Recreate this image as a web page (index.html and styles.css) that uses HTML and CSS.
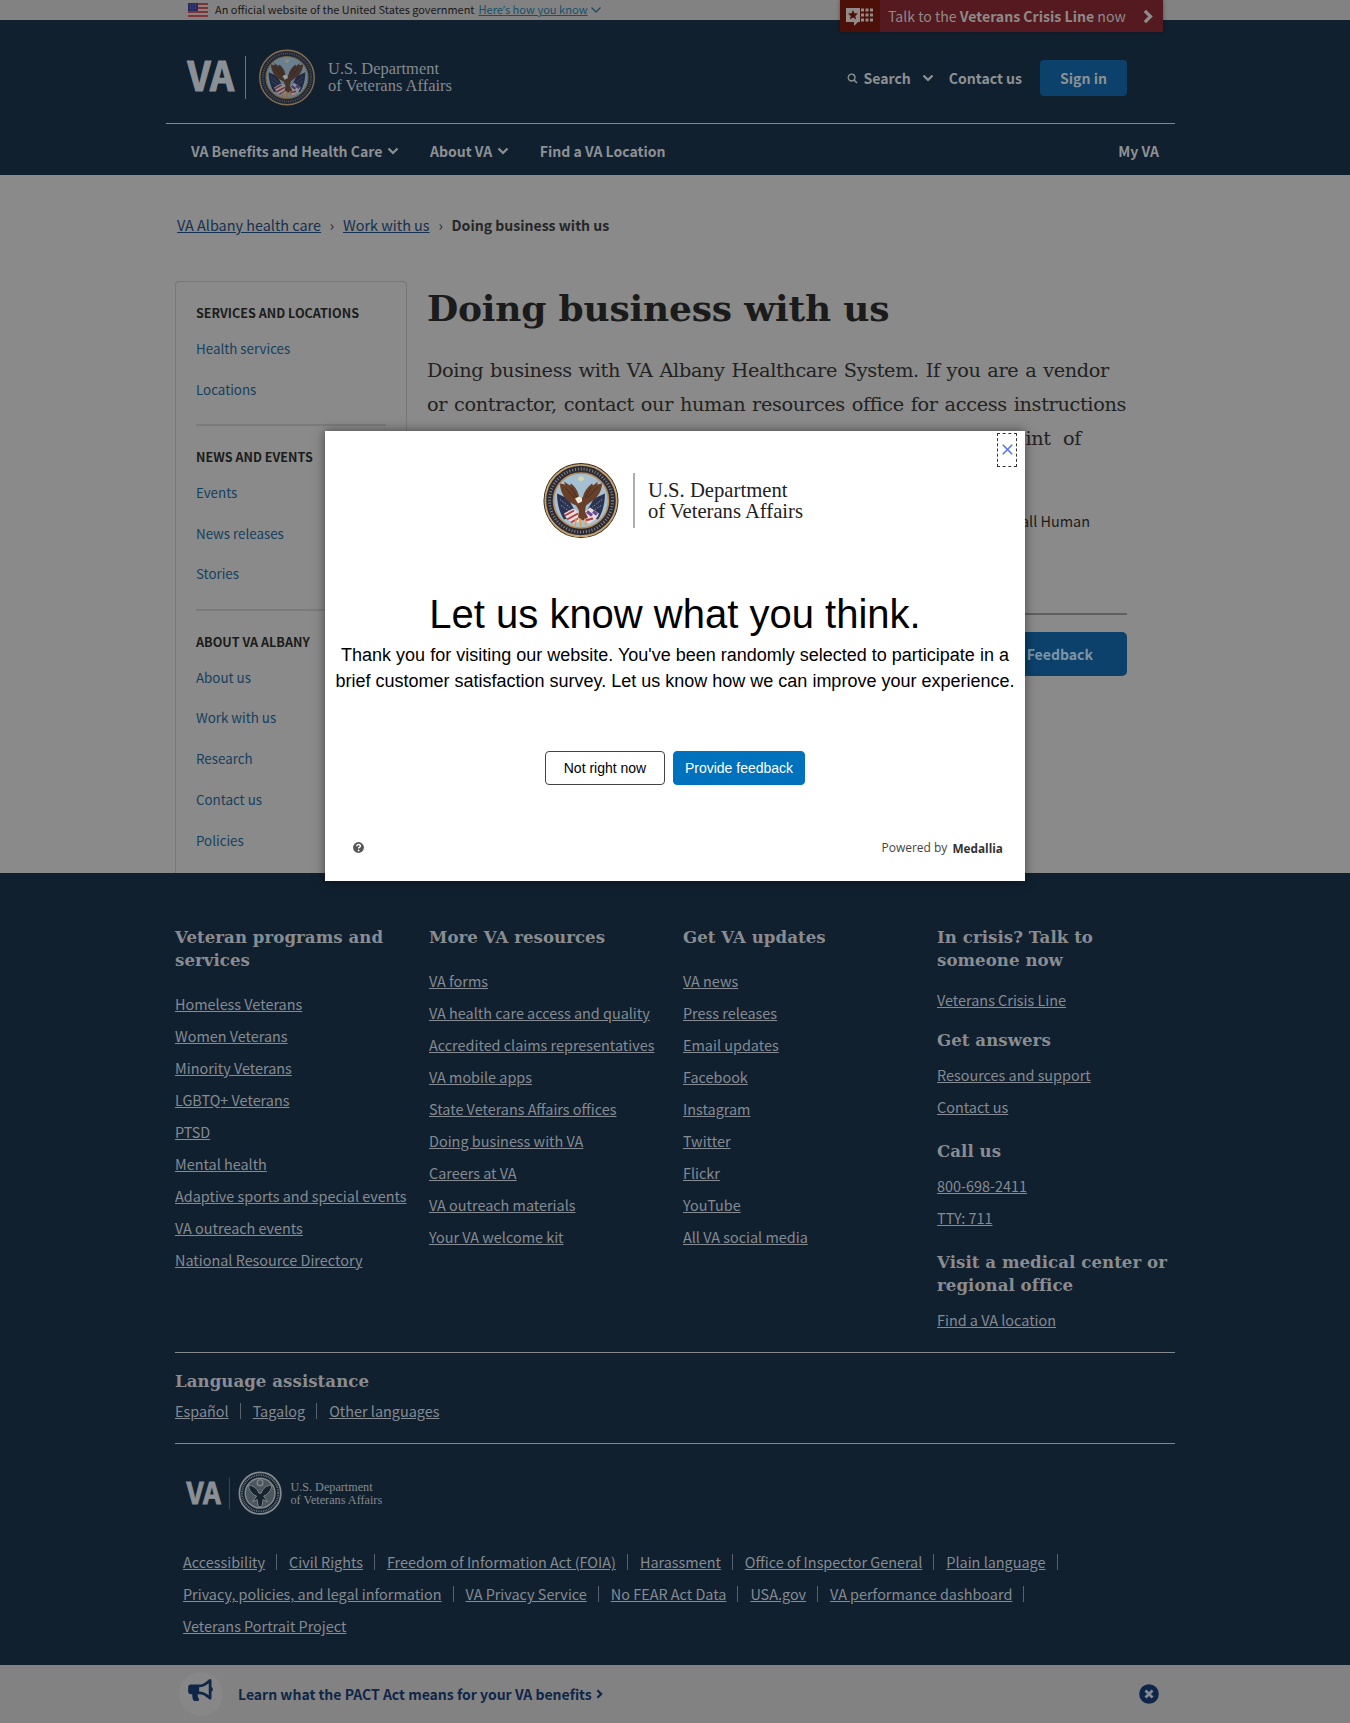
FILE: index.html
```html
<!DOCTYPE html>
<html lang="en">
<head>
<meta charset="utf-8">
<title>Doing business with us | VA Albany health care</title>
<link rel="stylesheet" href="styles.css">
</head>
<body>
<svg class="defs" width="0" height="0" aria-hidden="true">
  <symbol id="chev" viewBox="0 0 12 8"><path d="M1.5 1.5 6 6l4.500-4.500" fill="none" stroke="currentColor" stroke-width="2.200"/></symbol>
  <symbol id="chev-right" viewBox="0 0 8 12"><path d="M1.500 1.500 6 6 1.500 10.500" fill="none" stroke="currentColor" stroke-width="2.600"/></symbol>
  <symbol id="seal" viewBox="0 0 76 76">
    <circle cx="38" cy="38" r="37.500" fill="#2c2420"/>
    <circle cx="38" cy="38" r="35.700" fill="#292b3a" stroke="#c9a36c" stroke-width="1.800"/>
    <circle cx="38" cy="38" r="31.500" fill="none" stroke="#8c8474" stroke-width="2.800" stroke-dasharray="1 1.900"/>
    <circle cx="38" cy="38" r="27.500" fill="#a4c0d2" stroke="#b98d55" stroke-width="1.600"/>
    <path d="M14 31l11 5 8 14-3 4-9 3c-4-6-7-15-7-26zM62 31l-11 5-8 14 3 4 9 3c4-6 7-15 7-26z" fill="#2b3350"/>
    <path d="M17 37l10 8M18 43l9 6M59 37l-10 8M58 43l-9 6" stroke="#8c9bb5" stroke-width="1" stroke-dasharray="1.500 1.500"/>
    <path d="M21 51l9-5 7 4-1 9-5 2c-5-2-8-5-10-10zM56 51l-9-6-6 5v9l5 2c5-2 8-5 10-10z" fill="#e6dcdc"/>
    <path d="M22 53l9-5M24 57l11-6M28 60l7-4M42 58l8-2" stroke="#b23a40" stroke-width="1.900"/>
    <path d="M44 49l5 4M50 49l4 3" stroke="#6a4a90" stroke-width="3"/>
    <path d="M17 21l5 1-1-3 6 4 1-2c5 4 7 8 8 13l2 3 2-3c1-5 4-9 9-13l1 2 5-4-1 3 5-1c0 8-5 15-12 19l-4 3-1 6 3 6-5 3-5-3 1-7-3-5-4-2c-7-4-12-11-12-20z" fill="#68402a"/>
    <path d="M22 25l10 11M28 25l6 10M54 25L44 36M48 25l-6 10" stroke="#482b1c" stroke-width="1"/>
    <path d="M32 36l4-2 3 2v3l-4 2z" fill="#eee8dc"/>
    <path d="M36 14h4l1 3-3 2-3-2z" fill="#d9d6a4"/>
    <path d="M33 56l-1 8M37 56l1 9M42 56l1 7" stroke="#e99b48" stroke-width="1.700"/>
  </symbol>
  <symbol id="seal-mono" viewBox="0 0 76 76">
    <circle cx="38" cy="38" r="35.500" fill="none" stroke="#85898e" stroke-width="3"/>
    <circle cx="38" cy="38" r="31" fill="none" stroke="#6b7279" stroke-width="3.500" stroke-dasharray="1.500 1.500"/>
    <circle cx="38" cy="38" r="25.500" fill="#4c565f" stroke="#85898e" stroke-width="2.500"/>
    <path d="M18 24c7 1 15 5 18 14h4c3-9 9-13 18-14-1 9-6 16-14 19l7 10-8-4-2 12h-6l-2-12-8 4 7-10c-8-3-13-10-14-19z" fill="#15232f" stroke="#85898e" stroke-width="1.500"/>
    <circle cx="38" cy="20" r="5" fill="none" stroke="#85898e" stroke-width="2"/>
  </symbol>
</svg>

<div class="gov-banner">
  <div class="gov-inner">
    <svg class="flag" width="20" height="14" viewBox="0 0 20 14"><path fill="#8b8180" d="M0 0h20v14H0z"/><path d="M0 1h20M0 5h20M0 9h20M0 13h20" stroke="#7d3436" stroke-width="1.800"/><path fill="#262b66" d="M0 0h10v8H0z"/><path d="M2 2h7M2 5h7" stroke="#62658a" stroke-width="1" stroke-dasharray="1 1.500"/></svg>
    <span class="gov-text">An official website of the United States government</span>
    <a class="gov-link">Here<span class="apos">’</span>s how you know</a>
    <svg class="gov-chev" width="12" height="8" viewBox="0 0 12 8"><path d="M1.500 1.500 6 6l4.500-4.500" fill="none" stroke="#1b4a5c" stroke-width="1.300"/></svg>
  </div>
</div>
<div class="crisis">
  <div class="crisis-icon"><svg width="30" height="20" viewBox="0 0 30 20"><path d="M1 1h14v14h-2l-4 4v-4H1z" fill="#918c8a"/><path d="M8 3l1.400 3.300 3.600.3-2.700 2.400.8 3.500L8 10.600l-3.100 1.900.8-3.500L3 6.600l3.600-.3z" fill="#4c1009"/><path d="M16 3h13M16 8h13M16 13h13" stroke="#918c8a" stroke-width="3" stroke-dasharray="3 1.500"/></svg></div>
  <span class="crisis-text">Talk to the <b>Veterans Crisis Line</b> now</span>
  <svg width="10" height="15" viewBox="0 0 8 12"><use href="#chev-right"/></svg>
</div>

<header class="header">
  <div class="head-row">
    <svg class="logo" width="270" height="60" viewBox="187 47 270 60">
      <text x="187.500" y="91" class="logo-va" textLength="46.500" lengthAdjust="spacingAndGlyphs">VA</text>
      <path d="M245.500 56v43" stroke="#6d757d"/>
      <g class="dim"><use href="#seal" x="258" y="48.500" width="58" height="58"/></g>
      <text x="328" y="74" class="logo-dept" textLength="111" lengthAdjust="spacingAndGlyphs">U.S. Department</text>
      <text x="328" y="91" class="logo-dept" textLength="124" lengthAdjust="spacingAndGlyphs">of Veterans Affairs</text>
    </svg>
    <div class="actions">
      <svg class="mag" width="11" height="11" viewBox="0 0 11 11"><circle cx="4.600" cy="4.600" r="3.400" fill="none" stroke="currentColor" stroke-width="1.300"/><path d="M7 7l3 3" stroke="currentColor" stroke-width="1.500"/></svg>
      <span class="search">Search</span>
      <svg class="a-chev" width="12" height="8"><use href="#chev"/></svg>
      <span class="contact">Contact us</span>
      <span class="signin">Sign in</span>
    </div>
  </div>
  <nav class="nav">
    <span>VA Benefits and Health Care</span><svg class="n-chev" width="12" height="8"><use href="#chev"/></svg>
    <span>About VA</span><svg class="n-chev" width="12" height="8"><use href="#chev"/></svg>
    <span>Find a VA Location</span>
    <span class="myva">My VA</span>
  </nav>
</header>

<main class="main">
  <div class="crumbs"><a>VA Albany health care</a><i>›</i><a>Work with us</a><i>›</i><b>Doing business with us</b></div>
  <div class="columns">
    <aside class="side">
      <section><h2>SERVICES AND LOCATIONS</h2><a>Health services</a><a>Locations</a></section>
      <section><h2>NEWS AND EVENTS</h2><a>Events</a><a>News releases</a><a>Stories</a></section>
      <section><h2>ABOUT VA ALBANY</h2><a>About us</a><a>Work with us</a><a>Research</a><a>Contact us</a><a>Policies</a></section>
    </aside>
    <article class="article">
      <h1>Doing business with us</h1>
      <p class="intro"><span class="l1">Doing business with VA Albany Healthcare System. If you are a vendor</span><span class="l2">or contractor, contact our human resources office for access instructions</span><span class="l3">and with help in handling the other procedures and a point of</span></p>
      <p class="body">call Human</p>
      <hr>
      <div class="fb-row"><span class="fb">Feedback</span></div>
    </article>
  </div>
</main>

<footer class="footer">
  <div class="fcols">
    <div><h3>Veteran programs and<br>services</h3><ul><li><a>Homeless Veterans</a></li><li><a>Women Veterans</a></li><li><a>Minority Veterans</a></li><li><a>LGBTQ+ Veterans</a></li><li><a>PTSD</a></li><li><a>Mental health</a></li><li><a>Adaptive sports and special events</a></li><li><a>VA outreach events</a></li><li><a>National Resource Directory</a></li></ul></div>
    <div><h3>More VA resources</h3><ul><li><a>VA forms</a></li><li><a>VA health care access and quality</a></li><li><a>Accredited claims representatives</a></li><li><a>VA mobile apps</a></li><li><a>State Veterans Affairs offices</a></li><li><a>Doing business with VA</a></li><li><a>Careers at VA</a></li><li><a>VA outreach materials</a></li><li><a>Your VA welcome kit</a></li></ul></div>
    <div><h3>Get VA updates</h3><ul><li><a>VA news</a></li><li><a>Press releases</a></li><li><a>Email updates</a></li><li><a>Facebook</a></li><li><a>Instagram</a></li><li><a>Twitter</a></li><li><a>Flickr</a></li><li><a>YouTube</a></li><li><a>All VA social media</a></li></ul></div>
    <div class="contact-col"><h3>In crisis? Talk to<br>someone now</h3><ul class="crisis-list"><li><a>Veterans Crisis Line</a></li></ul><h3 class="answers">Get answers</h3><ul><li><a>Resources and support</a></li><li><a>Contact us</a></li></ul><h3>Call us</h3><ul><li><a>800-698-2411</a></li><li><a>TTY: 711</a></li></ul><h3>Visit a medical center or<br>regional office</h3><ul><li><a>Find a VA location</a></li></ul></div>
  </div>
  <div class="lang"><h3>Language assistance</h3><div class="links"><a>Español</a><i></i><a>Tagalog</a><i></i><a>Other languages</a></div></div>
  <div class="foot-end">
    <svg class="logo" width="200" height="44.400" viewBox="187 47 270 60">
      <text x="187.500" y="91" class="logo-va" textLength="46.500" lengthAdjust="spacingAndGlyphs">VA</text>
      <path d="M245.500 56v43" stroke="#4a545e"/>
      <use href="#seal-mono" x="257" y="47" width="60" height="60"/>
      <text x="328" y="74" class="logo-dept" textLength="111" lengthAdjust="spacingAndGlyphs">U.S. Department</text>
      <text x="328" y="91" class="logo-dept" textLength="124" lengthAdjust="spacingAndGlyphs">of Veterans Affairs</text>
    </svg>
    <div class="links"><a>Accessibility</a><i></i><a>Civil Rights</a><i></i><a>Freedom of Information Act (FOIA)</a><i></i><a>Harassment</a><i></i><a>Office of Inspector General</a><i></i><a>Plain language</a><i></i></div>
    <div class="links"><a>Privacy, policies, and legal information</a><i></i><a>VA Privacy Service</a><i></i><a>No FEAR Act Data</a><i></i><a>USA.gov</a><i></i><a>VA performance dashboard</a><i></i></div>
    <div class="links"><a>Veterans Portrait Project</a></div>
  </div>
</footer>

<div class="promo">
  <div class="promo-inner">
    <div class="horn"><svg width="25" height="22" viewBox="0 0 576 512"><path fill="#0f2648" d="M576 240c0-23.630-12.950-44.040-32-55.120V32.010C544 23.260 537.020 0 512 0c-7.120 0-14.190 2.380-19.980 7.020l-85.030 68.030C364.280 109.190 310.660 128 256 128H64c-35.350 0-64 28.650-64 64v96c0 35.350 28.650 64 64 64h33.700c-1.390 10.480-2.180 21.140-2.180 32 0 39.770 9.260 77.350 25.560 110.940 5.190 10.690 16.520 17.060 28.400 17.060h74.280c26.050 0 41.690-29.840 25.900-50.560-16.400-21.520-26.150-48.360-26.150-77.440 0-11.110 1.620-21.790 4.410-32H256c54.660 0 108.280 18.810 150.980 52.950l85.030 68.030a32.023 32.023 0 0 0 19.980 7.020c24.920 0 32-22.780 32-32V295.130C563.050 284.040 576 263.630 576 240zm-96 141.420l-33.050-26.440C392.950 311.780 325.120 288 256 288v-96c69.120 0 136.950-23.780 190.950-66.980L480 98.580v282.840z"/></svg></div>
    <b>Learn what the PACT Act means for your VA benefits</b>
    <svg class="p-chev" width="7" height="10" viewBox="0 0 8 12"><use href="#chev-right"/></svg>
    <svg class="p-close" width="20" height="20" viewBox="0 0 20 20"><circle cx="10" cy="10" r="9.800" fill="#0f2648"/><path d="M6.500 6.500l7 7M13.500 6.500l-7 7" stroke="#858b92" stroke-width="2.800"/></svg>
  </div>
</div>

<div class="modal" role="dialog">
  <div class="close"><svg width="11" height="11" viewBox="0 0 11 11"><path d="M.8.800l9.400 9.400M10.200.800L.8 10.200" stroke="#5476f2" stroke-width="1.600"/></svg></div>
  <svg class="m-logo" width="270" height="88" viewBox="536 456 270 88">
    <use href="#seal" x="543" y="462.500" width="76" height="76"/>
    <path d="M634 473v55" stroke="#777" stroke-width="1.200"/>
    <text x="648" y="497" class="m-dept" textLength="139.500" lengthAdjust="spacingAndGlyphs">U.S. Department</text>
    <text x="648" y="518" class="m-dept" textLength="155" lengthAdjust="spacingAndGlyphs">of Veterans Affairs</text>
  </svg>
  <h2>Let us know what you think.</h2>
  <p>Thank you for visiting our website. You've been randomly selected to participate in a<br>brief customer satisfaction survey. Let us know how we can improve your experience.</p>
  <div class="btns"><span class="no">Not right now</span><span class="yes">Provide feedback</span></div>
  <div class="m-foot">
    <svg width="11" height="11" viewBox="0 0 11 11"><circle cx="5.500" cy="5.500" r="5.400" fill="#555"/><path d="M3.700 4.300C3.700 2 7.400 2 7.400 4.100c0 1.300-1.800 1.300-1.800 2.500" fill="none" stroke="#fff" stroke-width="1.400"/><circle cx="5.600" cy="8.400" r=".9" fill="#fff"/></svg>
    <span class="pow">Powered by</span><span class="med">Medallia</span>
  </div>
</div>
</body>
</html>
```
FILE: styles.css
```css
* { box-sizing: border-box; }
body {
  position: relative; margin: 0; width: 1350px; height: 1723px; overflow: hidden;
  background: #8a8a8a; color: #1b1b1b;
  font: 14.42px/20px "Noto Sans CJK SC", sans-serif;
}
h1, h2, h3, p, ul { margin: 0; padding: 0; }
li { list-style: none; }
i { font-style: normal; }
svg { flex: none; }
span, a, b { white-space: nowrap; }
.defs { position: absolute; }

.gov-banner { height: 20px; background: #828282; }
.gov-inner { display: flex; padding-left: 188px; height: 20px; font-size: 10.95px; line-height: 19.5px; color: #191919; }
.flag { margin: 3px 7px 0 0; }
.gov-link { margin-left: 4px; color: #16506b; font-size: 11.1px; text-decoration: underline; }
.apos { font-family: "Open Sans", sans-serif; }
.gov-chev { margin-top: 6px; margin-left: 2px; }

.crisis {
  position: absolute; left: 840px; top: 0; width: 323px; height: 32px;
  display: flex; align-items: center; background: #541a20; color: #8f8a89;
  box-shadow: 0 0 4px rgba(0, 0, 0, .4);
}
.crisis-icon { width: 40px; height: 32px; padding: 7px 0 0 5px; background: #4c1009; }
.crisis-text { width: 263px; padding-left: 8px; font-size: 14.1px; }

.header { height: 155px; background: #11202f; color: #8e9194; font-size: 14.05px; font-weight: 700; }
.head-row { display: flex; align-items: center; width: 1009px; height: 104px; margin-left: 166px; padding: 11px 48px 1px 21px; border-bottom: 1px solid #84898e; }
.logo { display: block; overflow: visible; }
.logo-va { font: 700 40px "Noto Sans CJK SC", sans-serif; fill: #8b9096; stroke: #8b9096; stroke-width: 1.2px; }
.logo-dept { font: 17.5px "Liberation Serif", serif; fill: #858a90; }
.dim { opacity: .6; }
.actions { display: flex; align-items: center; margin-left: auto; padding-top: 3px; }
.mag { margin-right: 5px; }
.a-chev { margin: 0 15px 0 11px; }
.contact { margin-right: 18px; }
.signin { width: 87px; height: 36px; border-radius: 4px; background: #0b416a; line-height: 36px; text-align: center; }
.nav { display: flex; align-items: center; height: 51px; padding: 2px 191px 0; }
.n-chev { margin: 0 30.5px 0 5px; }
.myva { margin-left: auto; }

.main { height: 698px; padding: 40px 0 0 175px; }
.crumbs { display: flex; height: 20px; padding-left: 2px; color: #262626; }
.crumbs a { color: #16304f; text-decoration: underline; }
.crumbs i { width: 22px; text-align: center; }
.crumbs b { font-size: 14.05px; }
.columns { display: flex; gap: 20px; padding-top: 46px; }
.side { width: 232px; height: 592px; padding: 21px 20px 0; border: 1px solid #777; border-bottom: 0; border-radius: 4px 4px 0 0; }
.side section + section { border-top: 2px solid #7b7b7b; padding-top: 21px; }
.side section { padding-bottom: 14.3px; }
.side h2 { font-size: 12.6px; line-height: 20px; height: 25px; white-space: nowrap; }
.side a { display: block; height: 40.8px; font-size: 13.35px; line-height: 41px; color: #153f5e; }
.article { width: 700px; }
h1, h3, .intro { font-family: "DejaVu Serif", serif; }
h1 { font-size: 36px; line-height: 52px; letter-spacing: -.2px; white-space: nowrap; padding-top: 1px; }
.intro { padding-top: 20px; font-size: 19.3px; line-height: 34px; color: #222; }
.intro span { display: block; text-align-last: justify; letter-spacing: -.35px; }
.l1 { width: 682px; }
.l2 { width: 699px; }
.l3 { width: 654px; }
.body { margin-top: 54px; padding-right: 37px; text-align: right; line-height: 22px; }
.article hr { margin: 81px 0 17px; border: 0; border-top: 2px solid #606060; }
.fb-row { display: flex; justify-content: flex-end; }
.fb { width: 150px; height: 44px; padding-right: 34px; border-radius: 5px; background: #0b416a; color: #7f94a6; font-size: 14.05px; font-weight: 700; line-height: 44px; text-align: right; }

.footer { height: 792px; padding: 53px 175px 0; background: #11202f; color: #898d91; }
.fcols { display: grid; grid-template-columns: repeat(4, 254px); height: 426px; width: 1016px; }
.footer h3 { font-size: 16.6px; line-height: 23px; letter-spacing: .05px; white-space: nowrap; }
.fcols > div { width: 240px; }
.footer a { text-decoration: underline; color: #858b92; }
.fcols ul { margin-top: 16px; }
.fcols li { height: 32px; line-height: 32px; }
.contact-col ul { margin: 6.5px 0 17.5px; }
.contact-col .crisis-list { margin: 12px 0 13px; }
.lang { height: 92px; border: solid #84898e; border-width: 1px 0; padding-top: 17px; }
.links { display: flex; align-items: center; height: 32px; line-height: 32px; }
.lang .links { margin-top: 1.5px; }
.links i { width: 1px; height: 16px; margin: 0 12px 0 11px; background: #59626c; }
.foot-end { padding: 27px 0 0 8px; }
.foot-end .logo { margin: 0 0 31px 2.5px; }

.promo { height: 58px; background: #828282; color: #0f2648; }
.promo-inner { display: flex; align-items: center; padding-left: 179px; height: 58px; font-size: 14px; }
.horn { width: 44px; height: 44px; border-radius: 50%; background: #878787; padding: 7px 0 0 9px; margin-right: 15px; }
.p-chev { margin-left: 4px; }
.p-close { margin-left: auto; margin-right: 191px; }

.modal {
  position: absolute; left: 325px; top: 431px; width: 700px; height: 450px; padding-top: 25px;
  background: #fff; color: #000; text-align: center; font-family: "Liberation Sans", sans-serif;
  box-shadow: 0 0 10px rgba(0, 0, 0, .5);
}
.close { position: absolute; right: 8px; top: 2px; width: 20px; height: 34px; border: 1px dashed #333; padding-top: 6px; }
.m-logo { display: block; margin: 0 0 0 211px; overflow: visible; }
.m-dept { font: 22px "Liberation Serif", serif; fill: #222; }
.modal h2 { margin-top: 45px; font-size: 40px; font-weight: 400; line-height: 50px; }
.modal p { margin-top: 3px; font-size: 18px; line-height: 26px; white-space: nowrap; }
.btns { display: flex; justify-content: center; gap: 8px; margin-top: 57px; font-size: 14px; line-height: 32px; }
.btns span { height: 34px; border: 1px solid #444; border-radius: 4px; }
.no { width: 120px; }
.btns .yes { width: 132px; background: #0071bc; border-color: #0071bc; color: #fff; }
.m-foot { display: flex; align-items: center; margin-top: 51px; padding: 0 22px 0 28px; height: 22px; }
.pow { margin-left: auto; padding-top: 1px; font: 12px "Open Sans", sans-serif; color: #444; }
.med { margin-left: 5px; padding-top: 1px; font: 700 11.8px "Open Sans", sans-serif; color: #333; }
```
